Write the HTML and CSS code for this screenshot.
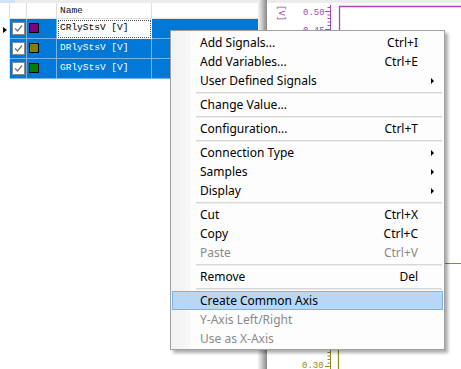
FILE: index.html
```html
<!DOCTYPE html>
<html>
<head>
<meta charset="utf-8">
<link rel="stylesheet" href="styles.css">
</head>
<body>
<div class="app">
  <div class="left">
    <div class="strip"><span class="strip-sel"></span></div>
    <div class="table">
      <div class="c h ind"></div>
      <div class="c h"></div>
      <div class="c h"></div>
      <div class="c h name">Name</div>
      <div class="c h last"></div>

      <div class="c ind"><span class="tri"></span></div>
      <div class="c sel"><span class="chk"><svg width="11" height="11" viewBox="0 0 11 11"><path d="M2 5.5 L4.5 8 L9 2.5" fill="none" stroke="#707070" stroke-width="1.2"/></svg></span></div>
      <div class="c sel"><span class="sw purple"></span></div>
      <div class="c sel name focus">CRlyStsV [V]</div>
      <div class="c sel last"></div>

      <div class="c ind"></div>
      <div class="c sel"><span class="chk"><svg width="11" height="11" viewBox="0 0 11 11"><path d="M2 5.5 L4.5 8 L9 2.5" fill="none" stroke="#707070" stroke-width="1.2"/></svg></span></div>
      <div class="c sel"><span class="sw olive"></span></div>
      <div class="c sel name">DRlyStsV [V]</div>
      <div class="c sel last"></div>

      <div class="c ind"></div>
      <div class="c sel"><span class="chk"><svg width="11" height="11" viewBox="0 0 11 11"><path d="M2 5.5 L4.5 8 L9 2.5" fill="none" stroke="#707070" stroke-width="1.2"/></svg></span></div>
      <div class="c sel"><span class="sw green"></span></div>
      <div class="c sel name">GRlyStsV [V]</div>
      <div class="c sel last"></div>
    </div>
  </div>
  <div class="splitter"></div>
  <div class="chart">
    <div class="strip"></div>
    <svg class="plot" width="194" height="369" viewBox="0 0 194 369">
      <text class="vlabel" x="0" y="0" transform="translate(5,5) rotate(90) translate(0,-7)">[V]</text>
      <text class="tick purple-t" x="36" y="14.5">0.50</text>
      <text class="tick purple-t" x="36" y="32.5">0.45</text>
      <g stroke="#a848b0" stroke-width="1">
        <line x1="63.5" y1="5" x2="63.5" y2="60"/>
        <line x1="58" y1="11.5" x2="63.5" y2="11.5"/>
        <line x1="60.5" y1="7.5" x2="63.5" y2="7.5"/>
        <line x1="60.5" y1="15" x2="63.5" y2="15"/>
        <line x1="60.5" y1="18.5" x2="63.5" y2="18.5"/>
        <line x1="60.5" y1="22" x2="63.5" y2="22"/>
        <line x1="60.5" y1="25.5" x2="63.5" y2="25.5"/>
        <line x1="58" y1="29.5" x2="63.5" y2="29.5"/>
      </g>
      <path d="M72.5 60 V6.5 H194" fill="none" stroke="#a848b0" stroke-width="1.3"/>
      <text class="tick olive-t" x="35" y="368">0.30</text>
      <g stroke="#8c8c20" stroke-width="1">
        <line x1="63.5" y1="300" x2="63.5" y2="369"/>
        <line x1="60.5" y1="352.5" x2="63.5" y2="352.5"/>
        <line x1="60.5" y1="356" x2="63.5" y2="356"/>
        <line x1="60.5" y1="359.5" x2="63.5" y2="359.5"/>
        <line x1="60.5" y1="363" x2="63.5" y2="363"/>
        <line x1="58" y1="366.5" x2="63.5" y2="366.5"/>
      </g>
      <path d="M71.5 369 V263.5 H194" fill="none" stroke="#8c8c20" stroke-width="1.2"/>
    </svg>
  </div>
</div>

<div class="menu">
  <div class="item"><span class="lbl">Add Signals...</span><span class="key">Ctrl+I</span><span class="arr"></span></div>
  <div class="item"><span class="lbl">Add Variables...</span><span class="key">Ctrl+E</span><span class="arr"></span></div>
  <div class="item"><span class="lbl">User Defined Signals</span><span class="key"></span><span class="arr"><i class="tri-r"></i></span></div>
  <div class="sep"></div>
  <div class="item"><span class="lbl">Change Value...</span><span class="key"></span><span class="arr"></span></div>
  <div class="sep"></div>
  <div class="item"><span class="lbl">Configuration...</span><span class="key">Ctrl+T</span><span class="arr"></span></div>
  <div class="sep"></div>
  <div class="item"><span class="lbl">Connection Type</span><span class="key"></span><span class="arr"><i class="tri-r"></i></span></div>
  <div class="item"><span class="lbl">Samples</span><span class="key"></span><span class="arr"><i class="tri-r"></i></span></div>
  <div class="item"><span class="lbl">Display</span><span class="key"></span><span class="arr"><i class="tri-r"></i></span></div>
  <div class="sep"></div>
  <div class="item"><span class="lbl">Cut</span><span class="key">Ctrl+X</span><span class="arr"></span></div>
  <div class="item"><span class="lbl">Copy</span><span class="key">Ctrl+C</span><span class="arr"></span></div>
  <div class="item dis"><span class="lbl">Paste</span><span class="key">Ctrl+V</span><span class="arr"></span></div>
  <div class="sep"></div>
  <div class="item"><span class="lbl">Remove</span><span class="key">Del</span><span class="arr"></span></div>
  <div class="sep"></div>
  <div class="item hot"><span class="lbl">Create Common Axis</span><span class="key"></span><span class="arr"></span></div>
  <div class="item dis"><span class="lbl">Y-Axis Left/Right</span><span class="key"></span><span class="arr"></span></div>
  <div class="item dis"><span class="lbl">Use as X-Axis</span><span class="key"></span><span class="arr"></span></div>
</div>
</body>
</html>
```

FILE: styles.css
```css
html, body {
  margin: 0;
  padding: 0;
  background: #fff;
}
body {
  width: 461px;
  height: 369px;
  overflow: hidden;
  position: relative;
}
.app {
  display: flex;
  width: 461px;
  height: 369px;
}
.left {
  width: 258px;
  flex: none;
  display: flex;
  flex-direction: column;
}
.strip {
  height: 3px;
  background: #ececec;
  display: flex;
  flex: none;
}
.strip-sel {
  width: 15px;
  background: #cfe3f5;
}
.table {
  display: grid;
  grid-template-columns: 10px 17px 30px 95px 1fr;
  grid-template-rows: 16px 20px 20px 20px;
  font-family: "Liberation Mono", "DejaVu Sans Mono", monospace;
  font-size: 9.5px;
}
.c {
  box-sizing: border-box;
  border-right: 1px solid rgba(255,255,255,0.45);
  border-bottom: 1px solid rgba(255,255,255,0.45);
  position: relative;
}
.c.h {
  border-right: 1px solid #dedede;
  border-bottom: 1px solid #dedede;
  background: #fff;
}
.c.h.name {
  padding: 2px 0 0 3px;
  line-height: 12px;
  color: #111;
}
.c.ind {
  background: #fff;
  border-right: 1px solid #dedede;
  border-bottom: none;
  display: flex;
  align-items: center;
}
.tri {
  width: 0;
  height: 0;
  border-top: 3px solid transparent;
  border-bottom: 3px solid transparent;
  border-left: 4px solid #000;
  margin: 2px 0 0 3px;
}
.c.sel {
  background: #0078d7;
}
.c.sel.name {
  color: #fff;
  padding: 3px 0 0 3px;
  line-height: 12px;
  white-space: nowrap;
}
.c.sel.name.focus {
  background: #fff;
  color: #000;
  outline: 1px dotted #555;
  outline-offset: -2px;
}
.c.last {
  border-right: none;
}
.chk {
  position: absolute;
  left: 2px;
  top: 3px;
  width: 11px;
  height: 11px;
  background: #fff;
  border: 1px solid #8a8a8a;
  display: block;
}
.chk svg { display: block; }
.sw {
  position: absolute;
  left: 2px;
  top: 4px;
  width: 8px;
  height: 8px;
  border: 1px solid #000;
}
.sw.purple { background: #800080; }
.sw.olive { background: #808000; }
.sw.green { background: #008000; }

.splitter {
  width: 9px;
  flex: none;
  background: linear-gradient(to right, #f2f2f2, #d8d8d8 30%, #a9a9a9 70%, #8e8e8e 95%, #c0c0c0);
}
.chart {
  flex: 1;
  position: relative;
}
.chart .strip {
  background: #ececec;
}
.plot {
  position: absolute;
  left: 0;
  top: 0;
}
.vlabel {
  font-family: "Liberation Mono", "DejaVu Sans Mono", monospace;
  font-size: 9px;
  fill: #a848b0;
}
.tick {
  font-family: "Liberation Mono", "DejaVu Sans Mono", monospace;
  font-size: 9px;
}
.purple-t { fill: #a848b0; }
.olive-t { fill: #8c8c20; }

.menu {
  position: absolute;
  left: 170px;
  top: 30px;
  width: 275px;
  box-sizing: border-box;
  border: 1px solid #a0a0a0;
  padding: 2px 0 1px;
  background: linear-gradient(to right, #f1f1f1 0, #f7f7f7 19px, #fdfdfd 20px, #fdfdfd 100%);
  box-shadow: 3px 3px 3px rgba(0,0,0,0.32);
  font-family: "Noto Sans", "Open Sans", sans-serif;
  font-size: 12px;
  color: #000;
}
.item {
  display: flex;
  align-items: center;
  height: 19px;
  box-sizing: border-box;
  padding: 0 9px 0 28px;
  margin: 0 1px;
  white-space: nowrap;
}
.item .lbl { flex: 1; }
.item .key { text-align: right; }
.item .arr {
  width: 16px;
  display: flex;
  justify-content: flex-end;
  align-items: center;
}
.tri-r {
  display: block;
  width: 0;
  height: 0;
  border-top: 3px solid transparent;
  border-bottom: 3px solid transparent;
  border-left: 3px solid #000;
}
.item.dis { color: #8a8a8a; }
.item.hot {
  background: #b8d7f4;
  border: 1px solid #7cb4e8;
  padding-left: 27px;
  padding-right: 8px;
}
.sep {
  height: 5px;
  box-sizing: border-box;
  margin: 0 2px 0 25px;
  padding-top: 2px;
}
.sep::before {
  content: "";
  display: block;
  height: 1px;
  background: #d7d7d7;
  border-bottom: 1px solid #ececec;
}
```
